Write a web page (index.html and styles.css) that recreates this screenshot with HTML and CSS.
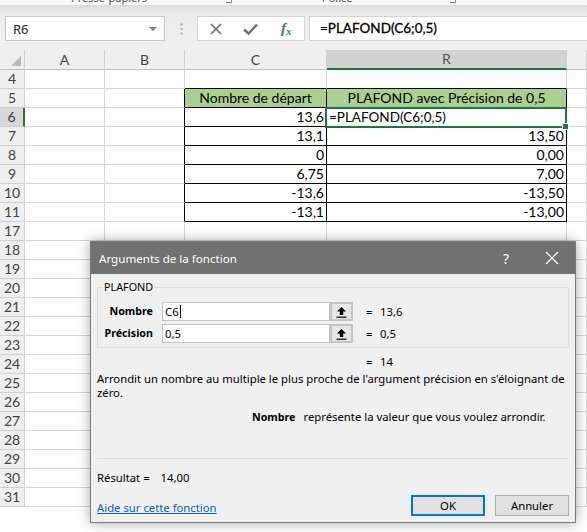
FILE: index.html
```html
<!DOCTYPE html>
<html lang="fr">

<head>
    <meta charset="UTF-8">
    <title>PLAFOND - Arguments de la fonction</title>
    <link rel="stylesheet" href="styles.css">
</head>

<body>
<!-- bottom edge of the ribbon -->
<div class="ribbon">
    <span class="ribbon-label clip-label">Presse-papiers</span>
    <span class="launcher launcher-1"></span>
    <span class="ribbon-label font-label">Police</span>
    <span class="launcher launcher-2"></span>
</div>

<!-- formula bar -->
<div class="formula-bar">
    <div class="name-box">
        <span>R6</span>
        <span class="caret"></span>
    </div>
    <div class="grip">
        <svg width="3" height="12" viewBox="0 0 3 12"><circle cx="1.5" cy="1.5" r="1.2" fill="#b4b4b4"/><circle cx="1.5" cy="6" r="1.2" fill="#b4b4b4"/><circle cx="1.5" cy="10.5" r="1.2" fill="#b4b4b4"/></svg>
    </div>
    <div class="fx-box">
        <span class="fx-btn">
            <svg width="12" height="12" viewBox="0 0 12 12"><path d="M1 1 L11 11 M11 1 L1 11" stroke="#6f6f6f" stroke-width="1.6" fill="none"/></svg>
        </span>
        <span class="fx-btn">
            <svg width="15" height="12" viewBox="0 0 15 12"><path d="M1 6.5 L5.5 10.5 L14 1.5" stroke="#6f6f6f" stroke-width="2.4" fill="none"/></svg>
        </span>
        <span class="fx-btn fx-label">f<small>x</small></span>
    </div>
    <div class="formula-input">=PLAFOND(C6;0,5)</div>
</div>

<!-- sheet -->
<table class="sheet">
    <colgroup>
        <col style="width: 25px">
        <col style="width: 80px">
        <col style="width: 80px">
        <col style="width: 142px">
        <col style="width: 240px">
        <col>
    </colgroup>
    <tr class="col-heads">
        <th class="corner"><span class="corner-tri"></span></th>
        <th>A</th><th>B</th><th>C</th><th class="col-sel">R</th><th></th>
    </tr>
    <tr><th>4</th><td></td><td></td><td class="bt"></td><td class="bt"></td><td></td></tr>
    <tr><th>5</th><td></td><td class="bl"></td><td class="bx head">Nombre de départ</td><td class="bx head">PLAFOND avec Précision de 0,5</td><td></td></tr>
    <tr><th class="row-sel">6</th><td></td><td class="bl"></td><td class="bx num">13,6</td><td class="bx active">=PLAFOND(C6;0,5)</td><td></td></tr>
    <tr><th>7</th><td></td><td class="bl"></td><td class="bx num">13,1</td><td class="bx num">13,50</td><td></td></tr>
    <tr><th>8</th><td></td><td class="bl"></td><td class="bx num">0</td><td class="bx num">0,00</td><td></td></tr>
    <tr><th>9</th><td></td><td class="bl"></td><td class="bx num">6,75</td><td class="bx num">7,00</td><td></td></tr>
    <tr><th>10</th><td></td><td class="bl"></td><td class="bx num">-13,6</td><td class="bx num">-13,50</td><td></td></tr>
    <tr><th>11</th><td></td><td class="bl"></td><td class="bx num">-13,1</td><td class="bx num">-13,00</td><td></td></tr>
    <tr><th>17</th><td></td><td></td><td></td><td></td><td></td></tr>
    <tr><th>18</th><td></td><td></td><td></td><td></td><td></td></tr>
    <tr><th>19</th><td></td><td></td><td></td><td></td><td></td></tr>
    <tr><th>20</th><td></td><td></td><td></td><td></td><td></td></tr>
    <tr><th>21</th><td></td><td></td><td></td><td></td><td></td></tr>
    <tr><th>22</th><td></td><td></td><td></td><td></td><td></td></tr>
    <tr><th>23</th><td></td><td></td><td></td><td></td><td></td></tr>
    <tr><th>24</th><td></td><td></td><td></td><td></td><td></td></tr>
    <tr><th>25</th><td></td><td></td><td></td><td></td><td></td></tr>
    <tr><th>26</th><td></td><td></td><td></td><td></td><td></td></tr>
    <tr><th>27</th><td></td><td></td><td></td><td></td><td></td></tr>
    <tr><th>28</th><td></td><td></td><td></td><td></td><td></td></tr>
    <tr><th>29</th><td></td><td></td><td></td><td></td><td></td></tr>
    <tr><th>30</th><td></td><td></td><td></td><td></td><td></td></tr>
    <tr><th>31</th><td></td><td></td><td></td><td></td><td></td></tr>
</table>

<!-- Arguments dialog -->
<div class="dialog">
    <div class="dialog-title">
        <span class="dialog-caption">Arguments de la fonction</span>
        <span class="title-btn">?</span>
        <span class="title-btn">
            <svg width="14" height="14" viewBox="0 0 14 14"><path d="M1 1 L13 13 M13 1 L1 13" stroke="#fff" stroke-width="1.2" fill="none"/></svg>
        </span>
    </div>

    <div class="dialog-body">
        <fieldset class="func-group">
            <legend>PLAFOND</legend>
            <div class="arg-grid">
                <label class="arg-label">Nombre</label>
                <div class="arg-input">C6<span class="text-caret"></span></div>
                <div class="ref-btn">
                    <svg width="11" height="12" viewBox="0 0 11 12"><path d="M5.5 1 L1 5.5 H3.8 V9 H7.2 V5.5 H10 Z" fill="#000"/><path d="M0.5 11.2 H10.5" stroke="#000" stroke-width="1.2"/></svg>
                </div>
                <div class="arg-value"><span class="eq">=</span>13,6</div>

                <label class="arg-label">Précision</label>
                <div class="arg-input">0,5</div>
                <div class="ref-btn">
                    <svg width="11" height="12" viewBox="0 0 11 12"><path d="M5.5 1 L1 5.5 H3.8 V9 H7.2 V5.5 H10 Z" fill="#000"/><path d="M0.5 11.2 H10.5" stroke="#000" stroke-width="1.2"/></svg>
                </div>
                <div class="arg-value"><span class="eq">=</span>0,5</div>
            </div>
        </fieldset>

        <div class="func-result"><span class="eq">=</span>14</div>

        <p class="func-desc">Arrondit un nombre au multiple le plus proche de l'argument précision en s'éloignant de zéro.</p>

        <div class="arg-desc">
            <b>Nombre</b>
            <span>représente la valeur que vous voulez arrondir.</span>
        </div>

        <div class="separator"></div>

        <div class="result-line">Résultat =<span class="result-value">14,00</span></div>

        <div class="dialog-footer">
            <a href="#" class="help-link">Aide sur cette fonction</a>
            <button class="btn btn-ok">OK</button>
            <button class="btn">Annuler</button>
        </div>
    </div>
</div>
</body>

</html>
```

FILE: styles.css
```css
* {
    box-sizing: border-box;
}

body {
    margin: 0;
    width: 587px;
    height: 532px;
    overflow: hidden;
    position: relative;
    background: #ffffff;
    font-family: Lato, 'Liberation Sans', sans-serif;
    color: #000;
}

/* ribbon edge */
.ribbon {
    height: 5px;
    overflow: hidden;
    display: flex;
    background: #f8f8f8;
    font-family: 'Noto Sans', sans-serif;
    font-size: 11px;
    line-height: 13px;
    color: #555;
}

.ribbon-label {
    margin-top: -9px;
}

.clip-label {
    margin-left: 71px;
}

.font-label {
    margin-left: 90px;
}

.launcher {
    width: 6px;
    height: 3px;
    border-right: 1px solid #888;
    border-bottom: 1px solid #888;
}

.launcher-1 {
    margin-left: 79px;
}

.launcher-2 {
    margin-left: 97px;
}

/* formula bar */
.formula-bar {
    height: 45px;
    display: flex;
    align-items: flex-start;
    padding: 11px 0 0 5px;
    background: linear-gradient(#dcdcdc, #ececec 9px, #f1f1f1);
}

.name-box {
    width: 160px;
    height: 25px;
    display: flex;
    align-items: center;
    padding: 0 7px;
    background: #fff;
    border: 1px solid #c6c6c6;
    font-family: 'Noto Sans', sans-serif;
    font-size: 13px;
    color: #222;
}

.caret {
    margin-left: auto;
    border-left: 4px solid transparent;
    border-right: 4px solid transparent;
    border-top: 4px solid #808080;
}

.grip {
    width: 32px;
    height: 25px;
    display: flex;
    align-items: center;
    justify-content: center;
}

.fx-box {
    width: 108px;
    height: 25px;
    display: flex;
    background: #fff;
    border: 1px solid #d4d4d4;
}

.fx-btn {
    width: 36px;
    display: flex;
    align-items: center;
    justify-content: center;
}

.fx-label {
    font-family: 'Liberation Serif', serif;
    font-style: italic;
    font-weight: bold;
    font-size: 15px;
    color: #3b8552;
}

.fx-label small {
    font-size: 11px;
    margin-top: 5px;
}

.formula-input {
    flex: 1;
    height: 25px;
    margin-left: 4px;
    padding-left: 10px;
    background: #fff;
    border: 1px solid #d4d4d4;
    border-right: none;
    font-size: 13.5px;
    line-height: 23px;
    -webkit-text-stroke: 0.3px #000;
}

/* sheet grid */
.sheet {
    width: 587px;
    table-layout: fixed;
    border-collapse: separate;
    border-spacing: 0;
    font-size: 14px;
}

.sheet th,
.sheet td {
    height: 19px;
    padding: 0 2px;
    border-right: 1px solid #d6d6d6;
    border-bottom: 1px solid #d6d6d6;
    line-height: 18px;
    white-space: nowrap;
    overflow: visible;
}

.sheet th {
    background: #efefef;
    font-weight: normal;
    font-size: 14px;
    color: #444;
    text-align: center;
    border-color: #d0d0d0;
}

.col-heads th {
    height: 20px;
    border-bottom-color: #c0c0c0;
}

.corner {
    position: relative;
}

.corner-tri {
    position: absolute;
    right: 3px;
    bottom: 3px;
    border-left: 10px solid transparent;
    border-bottom: 10px solid #b9b9b9;
}

.col-heads th.col-sel {
    background: #d2d2d2;
    color: #555;
    border-bottom: 2px solid #217346;
}

.sheet th.row-sel {
    background: #d8d8d8;
    color: #3a3a3a;
    border-right: 2px solid #217346;
}

.sheet td.bt {
    border-bottom-color: #000;
}

.sheet td.bl {
    border-right-color: #000;
}

.sheet td.bx {
    border-right-color: #000;
    border-bottom-color: #000;
}

.head {
    background: #a9d08e;
    text-align: center;
}

.num {
    text-align: right;
}

.active {
    position: relative;
    font-size: 13.5px;
}

.active::after {
    content: "";
    position: absolute;
    left: -2px;
    top: -1px;
    right: -1px;
    bottom: -2px;
    border: 2px solid #217346;
}

.active::before {
    content: "";
    position: absolute;
    right: -3px;
    bottom: -4px;
    width: 5px;
    height: 5px;
    background: #217346;
    border: 1px solid #fff;
    z-index: 1;
}

/* dialog */
.dialog {
    position: absolute;
    left: 90px;
    top: 241px;
    width: 486px;
    height: 282px;
    background: #f0f0f0;
    border: 1px solid #7a7a7a;
    box-shadow: 0 0 12px rgba(0, 0, 0, 0.35);
    font-family: 'Noto Sans', sans-serif;
    font-size: 11.3px;
    color: #000;
}

.dialog-title {
    height: 32px;
    display: flex;
    align-items: center;
    background: #717171;
    color: #fff;
    padding-left: 8px;
    font-size: 11.6px;
}

.dialog-caption {
    flex: 1;
}

.title-btn {
    width: 46px;
    height: 32px;
    display: flex;
    align-items: center;
    justify-content: center;
    font-size: 14px;
}

.dialog-body {
    padding: 0 6px;
}

.func-group {
    margin: 6px 0 0;
    padding: 8px 0 4px;
    border: 1px solid #dcdcdc;
}

.func-group legend {
    margin-left: 5px;
    padding: 0 1px;
    line-height: 14px;
    font-size: 10.8px;
}

.arg-grid {
    display: grid;
    grid-template-columns: 64px 168px 23px 1fr;
    grid-auto-rows: 19px;
    row-gap: 3px;
}

.arg-label {
    font-weight: bold;
    font-size: 10.7px;
    text-align: right;
    line-height: 19px;
    margin-right: 9px;
}

.arg-input {
    display: flex;
    align-items: center;
    padding-left: 2px;
    background: #fff;
    border: 1px solid #c4c4c4;
}

.text-caret {
    width: 1px;
    height: 13px;
    background: #000;
    margin-left: 1px;
}

.ref-btn {
    display: flex;
    align-items: center;
    justify-content: center;
    background: #e6e6e6;
    border: 2px solid #c4c4c4;
}

.arg-value {
    line-height: 19px;
    padding-left: 13px;
}

.eq {
    display: inline-block;
    width: 14px;
}

.func-result {
    margin-top: 7px;
    padding-left: 269px;
    line-height: 14px;
}

.func-desc {
    margin: 3px 0 0;
    line-height: 14px;
}

.arg-desc {
    margin-top: 10px;
    padding-left: 155px;
    display: flex;
    gap: 8px;
    line-height: 14px;
}

.arg-desc b {
    font-size: 10.7px;
}

.separator {
    margin-top: 34px;
    height: 1px;
    background: #dcdcdc;
}

.result-line {
    margin-top: 12px;
    line-height: 14px;
}

.result-value {
    margin-left: 11px;
}

.dialog-footer {
    margin-top: 10px;
    display: flex;
    align-items: center;
    gap: 10px;
}

.help-link {
    flex: 1;
    color: #0066cc;
    padding-top: 3px;
}

.btn {
    width: 74px;
    height: 21px;
    padding: 0;
    background: #e1e1e1;
    border: 1px solid #adadad;
    font-family: 'Noto Sans', sans-serif;
    font-size: 11.3px;
    color: #000;
}

.btn-ok {
    border: 2px solid #0078d7;
}
```
